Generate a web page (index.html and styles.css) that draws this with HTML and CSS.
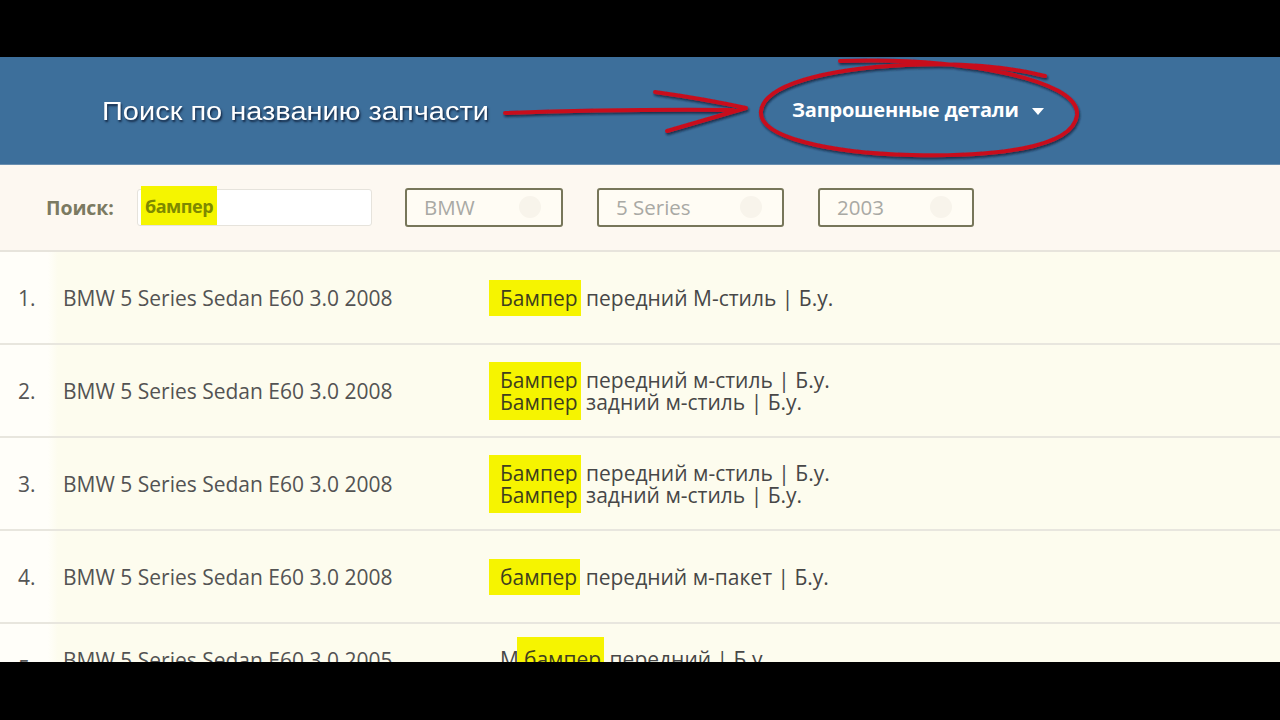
FILE: index.html
```html
<!DOCTYPE html>
<html lang="ru">
<head>
<meta charset="utf-8">
<title>Поиск по названию запчасти</title>
<link rel="stylesheet" href="styles.css">
</head>
<body>
<div class="screen">
  <div class="letterbox letterbox-top"></div>
  <div class="app">
    <header class="topbar">
      <div class="caption"><span class="caption-text">Поиск по названию запчасти</span></div>
      <div class="menu">Запрошенные детали <span class="caret"></span></div>
      <svg class="annot" width="1280" height="108" viewBox="0 0 1280 108" aria-hidden="true">
        <defs>
          <filter id="sh" x="-10%" y="-30%" width="120%" height="160%">
            <feDropShadow dx="1" dy="2" stdDeviation="1.2" flood-color="#0b1a33" flood-opacity="0.75"/>
          </filter>
        </defs>
        <g fill="none" stroke="#c8101f" stroke-width="4" stroke-linecap="round" stroke-linejoin="round" filter="url(#sh)">
          <path d="M505 56 Q620 52 733 53"/>
          <path d="M655 35 Q705 42 746 51 Q708 62 667 74"/>
          <path d="M840 4 C 960 0, 1080 22, 1077 58 C 1073 92, 990 100, 912 98 C 828 96, 758 80, 761 54 C 764 28, 825 12, 905 8 C 965 5, 1010 10, 1045 19"/>
        </g>
      </svg>
    </header>

    <div class="filters">
      <span class="search-label">Поиск:</span>
      <div class="search-input"><mark class="query">бампер</mark></div>
      <div class="select select-make"><span>BMW</span><span class="clear"></span></div>
      <div class="select select-model"><span>5 Series</span><span class="clear"></span></div>
      <div class="select select-year"><span>2003</span><span class="clear"></span></div>
    </div>

    <ol class="results">
      <li class="row">
        <span class="num">1.</span>
        <span class="car">BMW 5 Series Sedan E60 3.0 2008</span>
        <div class="parts">
          <div class="part"><mark class="hl">Бампер</mark> передний М-стиль | Б.у.</div>
        </div>
      </li>
      <li class="row">
        <span class="num">2.</span>
        <span class="car">BMW 5 Series Sedan E60 3.0 2008</span>
        <div class="parts">
          <div class="part"><mark class="hl">Бампер</mark> передний м-стиль | Б.у.</div>
          <div class="part"><mark class="hl">Бампер</mark> задний м-стиль | Б.у.</div>
        </div>
      </li>
      <li class="row">
        <span class="num">3.</span>
        <span class="car">BMW 5 Series Sedan E60 3.0 2008</span>
        <div class="parts">
          <div class="part"><mark class="hl">Бампер</mark> передний м-стиль | Б.у.</div>
          <div class="part"><mark class="hl">Бампер</mark> задний м-стиль | Б.у.</div>
        </div>
      </li>
      <li class="row">
        <span class="num">4.</span>
        <span class="car">BMW 5 Series Sedan E60 3.0 2008</span>
        <div class="parts">
          <div class="part"><mark class="hl">бампер</mark> передний м-пакет | Б.у.</div>
        </div>
      </li>
      <li class="row row-partial">
        <span class="num">5.</span>
        <span class="car">BMW 5 Series Sedan E60 3.0 2005</span>
        <div class="parts">
          <div class="part part-lead">М<mark class="hl hl-mid">бампер</mark> передний | Б.у.</div>
        </div>
      </li>
    </ol>
  </div>
  <div class="letterbox letterbox-bottom"></div>
</div>
</body>
</html>
```

FILE: styles.css
```css
* { box-sizing: border-box; }

html, body {
  margin: 0;
  padding: 0;
  background: #000;
}

.screen {
  width: 1280px;
  height: 720px;
  display: flex;
  flex-direction: column;
  overflow: hidden;
  font-family: "Open Sans", "Noto Sans", sans-serif;
}

.letterbox { background: #000; flex: none; }
.letterbox-top { height: 57px; }
.letterbox-bottom { height: 58px; }

.app {
  height: 605px;
  flex: none;
  overflow: hidden;
  background: #fdfcee;
  display: flex;
  flex-direction: column;
}

/* ---------- header ---------- */
.topbar {
  position: relative;
  height: 108px;
  flex: none;
  background: #3d6f9b;
  display: flex;
  align-items: center;
  padding-left: 102px;
  border-bottom: 1px solid #6a8fb0;
}

.caption {
  width: 690px;
  padding-top: 2px;
}

.caption-text {
  display: inline-block;
  font-family: "Liberation Sans", Arial, sans-serif;
  font-size: 26px;
  color: #fff;
  text-shadow: 1px 2px 2px rgba(10, 25, 50, 0.85);
  transform: scaleX(1.115);
  transform-origin: left center;
}

.menu {
  display: flex;
  align-items: center;
  font-family: "Open Sans", sans-serif;
  font-weight: 700;
  font-size: 20px;
  letter-spacing: -0.2px;
  color: #fff;
  padding-bottom: 2px;
}

.caret {
  width: 0;
  height: 0;
  border-left: 6px solid transparent;
  border-right: 6px solid transparent;
  border-top: 7px solid #fff;
  margin-left: 13px;
  margin-top: 3px;
}

.annot {
  position: absolute;
  left: 0;
  top: 0;
  overflow: visible;
  pointer-events: none;
}

/* ---------- filters ---------- */
.filters {
  height: 87px;
  flex: none;
  background: #fdf8f1;
  border-bottom: 2px solid #e7e4dc;
  display: flex;
  align-items: center;
  padding: 0 0 0 46px;
}

.search-label {
  font-weight: 700;
  font-size: 19.5px;
  letter-spacing: -0.1px;
  color: #7b7a62;
  width: 91px;
}

.search-input {
  width: 235px;
  height: 37px;
  background: #fff;
  border: 1px solid #e6e3dc;
  border-radius: 3px;
  display: flex;
  align-items: stretch;
  margin-right: 33px;
}

.query {
  background: #f5f500;
  color: #7e8a00;
  font-weight: 700;
  font-size: 18px;
  letter-spacing: -0.5px;
  padding: 0 4px;
  margin: -4px 0 0 3px;
  display: flex;
  align-items: center;
}

.select {
  height: 39px;
  border: 2px solid #77765a;
  border-radius: 3px;
  background: #fffcf4;
  display: flex;
  align-items: center;
  justify-content: space-between;
  padding: 0 20px 2px 17px;
  font-size: 20.5px;
  color: #a9a9a4;
  margin-right: 34px;
}

.select-make { width: 158px; }
.select-model { width: 187px; }
.select-year { width: 156px; }

.clear {
  width: 22px;
  height: 22px;
  border-radius: 50%;
  background: #f8f4eb;
}

/* ---------- results ---------- */
.results {
  list-style: none;
  margin: 0;
  padding: 0;
}

.row {
  height: 93px;
  display: grid;
  grid-template-columns: 55px 434px 1fr;
  align-items: center;
  border-bottom: 2px solid #e8e6de;
  background: linear-gradient(to right, #fffef9 0, #fffef9 48px, #fdfcee 58px);
  font-size: 21px;
  line-height: 22px;
  color: #4e4e4e;
}

.num {
  padding-left: 18px;
  color: #555;
}

.car {
  padding-left: 8px;
  color: #535353;
}

.parts {
  color: #474747;
}

.hl {
  display: inline-block;
  background: #f6f400;
  color: #3f3f1e;
  padding: 0 3px 0 11px;
}

.part:first-child .hl { padding-top: 7px; }
.part:last-child .hl { padding-bottom: 7px; }

.part-lead { padding-left: 11px; }

.hl-mid {
  margin-left: -2px;
  padding-left: 7px;
}

/* last row, cut by the bottom of the frame */
.row-partial {
  align-items: start;
}

.row-partial .num { padding-top: 33px; }
.row-partial .car { padding-top: 25px; }
.row-partial .parts { padding-top: 13px; }
.row-partial .part:first-child .hl { padding-top: 11px; }
```
